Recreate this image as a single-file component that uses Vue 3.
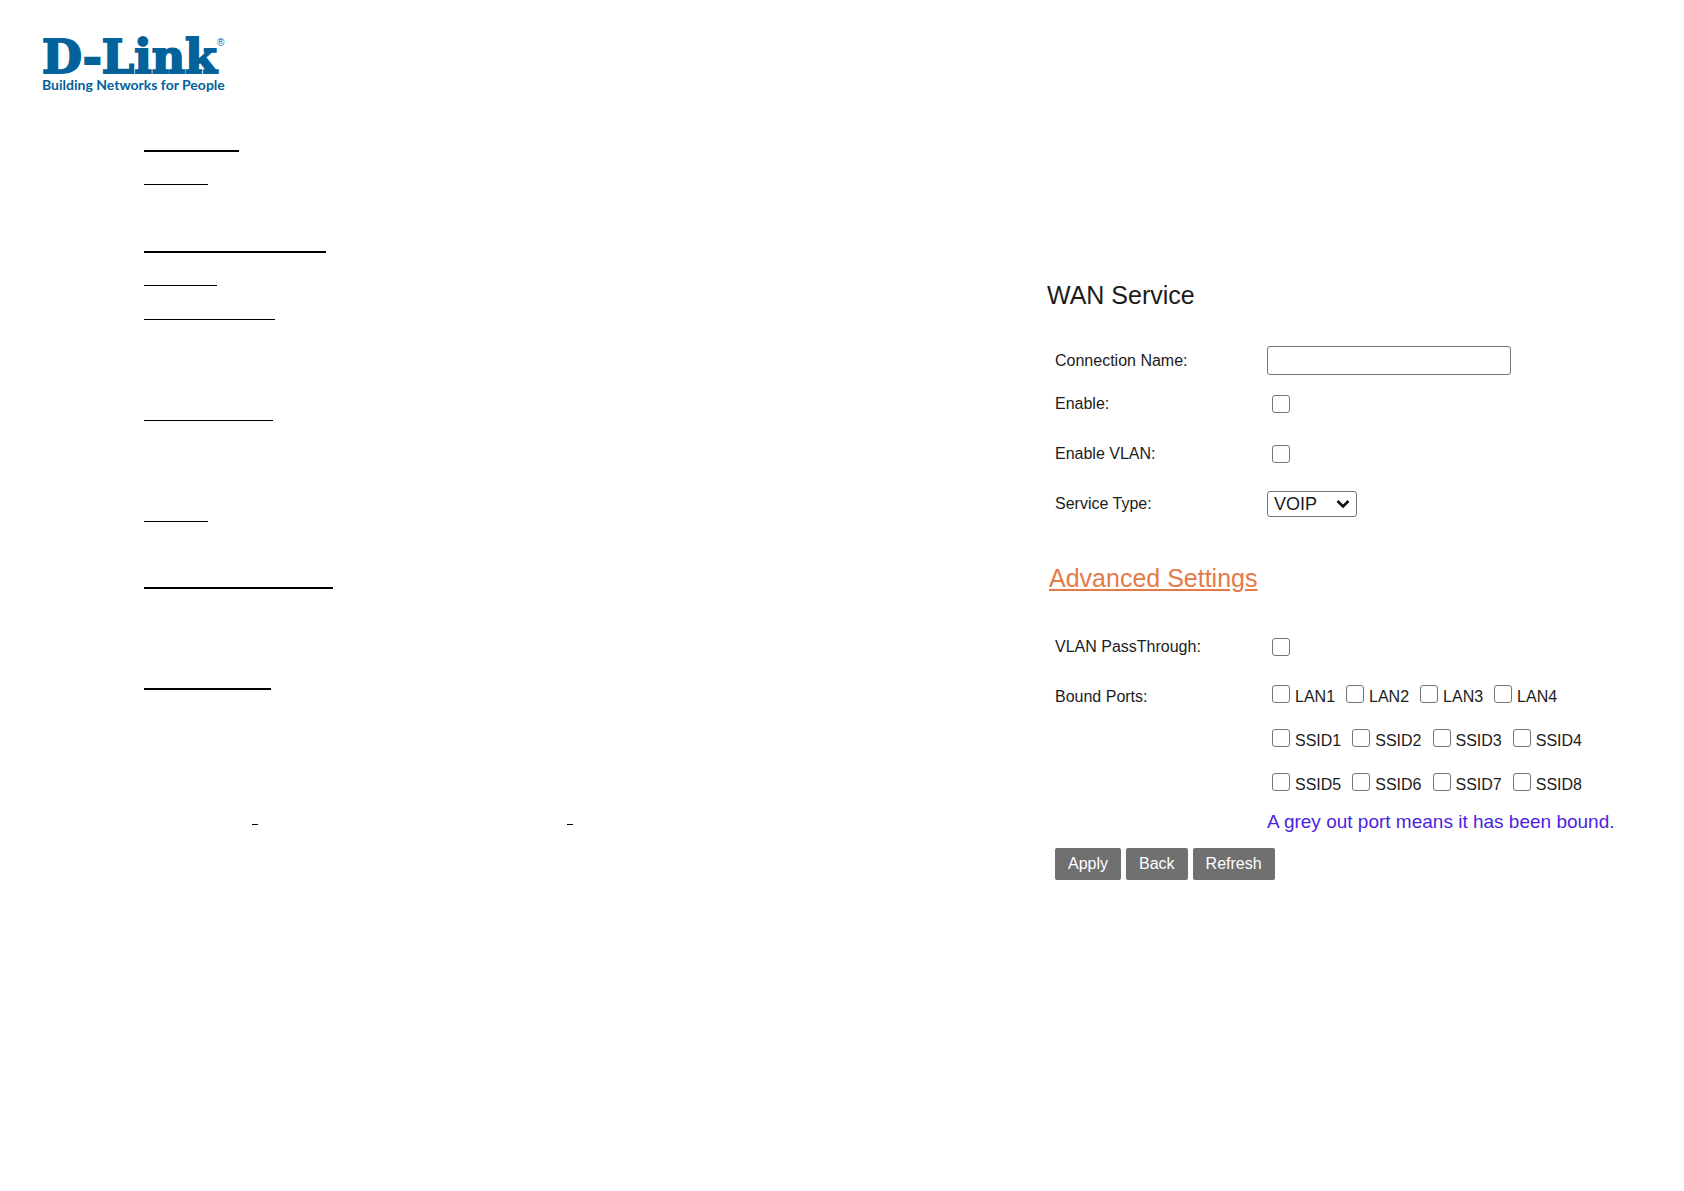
<script setup>
import { ref } from 'vue'

// Underlined entries of the left column: line number, width and weight of the rule
const rules = [
  { line: 1, width: 95, thick: true },
  { line: 2, width: 64 },
  { line: 4, width: 182, thick: true },
  { line: 5, width: 73 },
  { line: 6, width: 131 },
  { line: 9, width: 129 },
  { line: 12, width: 64 },
  { line: 14, width: 189, thick: true },
  { line: 17, width: 127, thick: true },
]

const portRows = [
  ['LAN1', 'LAN2', 'LAN3', 'LAN4'],
  ['SSID1', 'SSID2', 'SSID3', 'SSID4'],
  ['SSID5', 'SSID6', 'SSID7', 'SSID8'],
]

const connectionName = ref('')
const enabled = ref(false)
const vlanEnabled = ref(false)
const serviceType = ref('VOIP')
const passThrough = ref(false)
const boundPorts = ref([])
</script>

<template>
  <div class="page">
    <header class="brand">
      <div class="wordmark">D-Link<span class="reg">®</span></div>
      <div class="tagline">Building Networks for People</div>
    </header>

    <main class="columns">
      <div class="outline">
        <div
          v-for="rule in rules"
          :key="rule.line"
          class="rule"
          :class="{ thick: rule.thick }"
          :style="{ gridRow: rule.line, width: rule.width + 'px' }"
        ></div>
        <div class="ticks"><i></i><i></i></div>
      </div>

      <form class="service" @submit.prevent>
        <h1>WAN Service</h1>
        <div class="row first">
          <label class="name" for="conn">Connection Name:</label>
          <input id="conn" v-model="connectionName" class="text" type="text" />
        </div>
        <div class="row">
          <label class="name" for="enable">Enable:</label>
          <input id="enable" v-model="enabled" class="box" type="checkbox" />
        </div>
        <div class="row">
          <label class="name" for="vlan">Enable VLAN:</label>
          <input id="vlan" v-model="vlanEnabled" class="box" type="checkbox" />
        </div>
        <div class="row">
          <label class="name" for="type">Service Type:</label>
          <span class="pick">
            <select id="type" v-model="serviceType">
              <option>VOIP</option>
            </select>
            <svg viewBox="0 0 14 10" width="14" height="10" aria-hidden="true">
              <path d="M1.5 2l5.5 5.5 5.5-5.5" fill="none" stroke="#111" stroke-width="2.6" />
            </svg>
          </span>
        </div>

        <a class="advanced" href="#advanced">Advanced Settings</a>

        <div id="advanced" class="row">
          <label class="name" for="pass">VLAN PassThrough:</label>
          <input id="pass" v-model="passThrough" class="box" type="checkbox" />
        </div>
        <div class="row ports" role="group" aria-labelledby="bound">
          <span id="bound" class="name">Bound Ports:</span>
          <div>
            <div v-for="(row, i) in portRows" :key="i" class="portline">
              <label v-for="port in row" :key="port" class="port">
                <input v-model="boundPorts" class="box" type="checkbox" :value="port" />
                <span>{{ port }}</span>
              </label>
            </div>
            <p class="note">A grey out port means it has been bound.</p>
          </div>
        </div>

        <div class="actions">
          <button type="submit">Apply</button>
          <button type="button">Back</button>
          <button type="button">Refresh</button>
        </div>
      </form>
    </main>
  </div>
</template>

<style>
body {
  background: #fff;
}
</style>

<style scoped>
.page {
  font-family: "Liberation Sans", Arial, sans-serif;
  font-size: 16px;
  color: #1c1c1c;
}
.brand {
  box-sizing: border-box;
  height: 118px;
  padding: 37px 0 0 42px;
  color: #04629b;
}
.wordmark {
  display: flex;
  font: bold 46px/41px "DejaVu Serif", serif;
  -webkit-text-stroke: 2px #04629b;
}
.reg {
  font: 10px/12px "Liberation Sans", Arial, sans-serif;
  -webkit-text-stroke: 0;
}
.tagline {
  font: bold 14px/14px Lato, sans-serif;
  white-space: nowrap;
}
.columns {
  display: grid;
  grid-template-columns: minmax(0, 1fr) 637px;
  align-items: start;
}
.outline {
  display: grid;
  grid-template-rows: repeat(21, 1fr);
  height: 707px;
  padding-left: 144px;
}
.rule {
  align-self: end;
  border-bottom: 1px solid #000;
}
.rule.thick {
  border-bottom-width: 2px;
}
.ticks {
  grid-row: 21;
  align-self: end;
  display: flex;
  gap: 309px;
  padding-left: 108px;
}
.ticks i {
  width: 6px;
  border-bottom: 1px solid #000;
}
.service {
  padding-top: 161px;
}
h1 {
  margin: 0 0 31px;
  font-size: 25px;
  line-height: 32px;
  font-weight: 400;
}
.row {
  display: flex;
  align-items: center;
  height: 50px;
  padding-left: 8px;
}
.row.first {
  height: 37px;
}
.name {
  width: 212px;
}
.text {
  box-sizing: border-box;
  width: 244px;
  height: 29px;
  border: 1px solid #767676;
  border-radius: 3px;
  font: inherit;
}
.box {
  appearance: none;
  box-sizing: border-box;
  flex: none;
  width: 18px;
  height: 18px;
  margin: 0 0 0 5px;
  border: 1px solid #767676;
  border-radius: 3px;
  background: #fff;
}
.box:checked {
  background: #1a73e8;
}
.pick {
  display: grid;
  align-items: center;
}
.pick > * {
  grid-area: 1 / 1;
}
.pick svg {
  justify-self: end;
  margin-right: 7px;
  pointer-events: none;
}
select {
  appearance: none;
  width: 90px;
  height: 26px;
  padding: 0 6px;
  border: 1px solid #767676;
  border-radius: 3px;
  background: #fff;
  color: inherit;
  font: 18px/24px "Liberation Sans", Arial, sans-serif;
}
.advanced {
  display: block;
  width: max-content;
  margin: 33px 0 28px 2px;
  color: #e57a45;
  font-size: 25px;
  line-height: 32px;
}
.ports {
  align-items: flex-start;
  height: auto;
}
.ports .name {
  line-height: 50px;
}
.portline {
  display: flex;
  gap: 6px;
  height: 44px;
}
.port {
  display: flex;
  align-items: center;
}
.port span {
  padding: 6px 0 0 5px;
}
.note {
  margin: 6px 0 14px;
  color: #4a1fe0;
  font-size: 19px;
  line-height: 24px;
  white-space: nowrap;
}
.actions {
  display: flex;
  gap: 5px;
  padding-left: 8px;
}
button {
  height: 32px;
  padding: 0 13px;
  border: 0;
  border-radius: 2px;
  background: #707070;
  color: #fff;
  font: 16px/32px "Liberation Sans", Arial, sans-serif;
}
</style>
